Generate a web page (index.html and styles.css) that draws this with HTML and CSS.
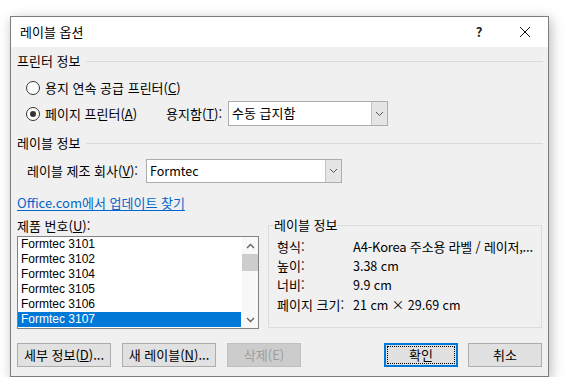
FILE: index.html
```html
<!DOCTYPE html>
<html lang="ko">
<head>
    <meta charset="UTF-8">
    <title>레이블 옵션</title>
    <link rel="stylesheet" href="styles.css">
</head>
<body>
    <div class="dialog">
        <div class="titlebar">
            <span class="title">레이블 옵션</span>
            <span class="help">?</span>
            <span class="close">
                <svg width="12" height="12" viewBox="0 0 12 12" fill="none" stroke="#111" stroke-width="1">
                    <path d="M1 1L11 11M11 1L1 11"></path>
                </svg>
            </span>
        </div>
        <div class="content">
            <div class="section-head"><span>프린터 정보</span><span class="rule"></span></div>

            <div class="radio-row first">
                <span class="radio"></span>
                <span>용지 연속 공급 프린터(<u>C</u>)</span>
            </div>
            <div class="radio-row tray-row">
                <span class="radio checked"></span>
                <span class="page-label">페이지 프린터(<u>A</u>)</span>
                <span class="tray-label">용지함(<u>T</u>):</span>
                <div class="combo tray-combo">
                    <span class="combo-text">수동 급지함</span>
                    <span class="combo-btn">
                        <svg width="9" height="6" viewBox="0 0 9 6" fill="none" stroke="#555" stroke-width="1">
                            <path d="M1 1L4.5 4.5L8 1"></path>
                        </svg>
                    </span>
                </div>
            </div>

            <div class="section-head second"><span>레이블 정보</span><span class="rule"></span></div>

            <div class="vendor-row">
                <span class="vendor-label">레이블 제조 회사(<u>V</u>):</span>
                <div class="combo vendor-combo">
                    <span class="combo-text latin">Formtec</span>
                    <span class="combo-btn">
                        <svg width="9" height="6" viewBox="0 0 9 6" fill="none" stroke="#555" stroke-width="1">
                            <path d="M1 1L4.5 4.5L8 1"></path>
                        </svg>
                    </span>
                </div>
            </div>

            <a class="update-link" href="#">Office.com에서 업데이트 찾기</a>

            <div class="lower">
                <div class="product">
                    <div class="product-label">제품 번호(<u>U</u>):</div>
                    <div class="listbox">
                        <div class="list-items">
                            <div class="item">Formtec 3101</div>
                            <div class="item">Formtec 3102</div>
                            <div class="item">Formtec 3104</div>
                            <div class="item">Formtec 3105</div>
                            <div class="item">Formtec 3106</div>
                            <div class="item selected">Formtec 3107</div>
                        </div>
                        <div class="scrollbar">
                            <span class="arrow">
                                <svg width="9" height="6" viewBox="0 0 9 6" fill="none" stroke="#606060" stroke-width="1.3">
                                    <path d="M1 5L4.5 1.5L8 5"></path>
                                </svg>
                            </span>
                            <span class="thumb"></span>
                            <span class="track"></span>
                            <span class="arrow">
                                <svg width="9" height="6" viewBox="0 0 9 6" fill="none" stroke="#606060" stroke-width="1.3">
                                    <path d="M1 1L4.5 4.5L8 1"></path>
                                </svg>
                            </span>
                        </div>
                    </div>
                </div>

                <fieldset class="info">
                    <legend>레이블 정보</legend>
                    <div class="info-grid">
                        <span>형식:</span><span class="tight">A4-Korea 주소용 라벨 / 레이저,...</span>
                        <span>높이:</span><span class="latin">3.38 cm</span>
                        <span>너비:</span><span class="latin">9.9 cm</span>
                        <span>페이지 크기:</span><span class="latin">21 cm × 29.69 cm</span>
                    </div>
                </fieldset>
            </div>

            <div class="buttons">
                <button class="btn wide">세부 정보(<u>D</u>)...</button>
                <button class="btn wide">새 레이블(<u>N</u>)...</button>
                <button class="btn disabled">삭제(E)</button>
                <span class="spacer"></span>
                <button class="btn default"><span class="focus">확인</span></button>
                <button class="btn">취소</button>
            </div>
        </div>
    </div>
</body>
</html>
```

FILE: styles.css
```css
body {
    margin: 0;
    background: #fff;
    font-family: "Noto Sans CJK KR", sans-serif;
    font-size: 13px;
    line-height: 16px;
    color: #000;
}
u {
    text-decoration: underline;
    text-underline-offset: 1px;
}
.latin {
    font-size: 12.5px;
}
.tight {
    letter-spacing: -0.2px;
}
.dialog {
    margin: 16px 0 0 10px;
    width: 537px;
    border: 1px solid #7c7c7c;
    background: #f0f0f0;
    box-shadow: 2px 3px 12px rgba(0,0,0,0.28);
}
.titlebar {
    height: 30px;
    background: #fff;
    display: flex;
    align-items: center;
    padding-left: 9px;
}
.title {
    flex: 1;
}
.help {
    width: 46px;
    text-align: center;
    font-weight: bold;
    color: #222;
}
.close {
    width: 46px;
    display: flex;
    justify-content: center;
}
.content {
    padding: 6px 6px 9px 6px;
}
.section-head {
    height: 16px;
    display: flex;
    align-items: center;
    gap: 6px;
}
.section-head.second {
    margin-top: 9px;
}
.rule {
    flex: 1;
    height: 1px;
    background: #dadada;
    margin-right: -1px;
}
.radio-row {
    display: flex;
    align-items: center;
    padding-left: 9px;
}
.radio-row.first {
    margin-top: 6px;
    height: 26px;
}
.tray-row {
    height: 25px;
}
.radio {
    width: 12px;
    height: 12px;
    border: 1px solid #333;
    border-radius: 50%;
    background: #fff;
    margin-right: 5px;
    display: flex;
    align-items: center;
    justify-content: center;
}
.radio.checked::after {
    content: "";
    width: 6px;
    height: 6px;
    border-radius: 50%;
    background: #333;
}
.page-label {
    width: 121px;
}
.tray-label {
    width: 62px;
}
.combo {
    display: flex;
    height: 25px;
    box-sizing: border-box;
    border: 1px solid #adadad;
    background: #fff;
}
.tray-combo {
    width: 160px;
}
.vendor-combo {
    width: 196px;
    height: 24px;
}
.combo-text {
    flex: 1;
    padding-left: 3px;
    line-height: 22px;
}
.combo-btn {
    width: 15px;
    background: #e5e5e5;
    border-left: 1px solid #c4c4c4;
    display: flex;
    align-items: center;
    justify-content: center;
}
.vendor-row {
    display: flex;
    align-items: center;
    margin-top: 8px;
    padding-left: 10px;
}
.vendor-label {
    width: 119px;
}
.update-link {
    display: block;
    margin-top: 12px;
    height: 16px;
    color: #0066cc;
    text-decoration: underline;
    text-underline-offset: 2px;
    width: max-content;
}
.lower {
    display: flex;
    margin-top: 6px;
    gap: 9px;
}
.product {
    width: 242px;
    flex-shrink: 0;
}
.product-label {
    height: 16px;
    margin-top: 1px;
}
.listbox {
    margin-top: 2px;
    height: 93px;
    box-sizing: border-box;
    border: 1px solid #828282;
    background: #fff;
    display: flex;
}
.list-items {
    flex: 1;
}
.item {
    height: 15px;
    line-height: 15px;
    padding-left: 3px;
    font-family: "Liberation Sans", sans-serif;
    font-size: 12px;
}
.item.selected {
    background: #0078d7;
    color: #fff;
}
.scrollbar {
    width: 16px;
    margin-left: 1px;
    background: #f8f8f8;
    display: flex;
    flex-direction: column;
}
.arrow {
    height: 17px;
    display: flex;
    align-items: center;
    justify-content: center;
}
.thumb {
    height: 17px;
    background: #cdcdcd;
}
.track {
    flex: 1;
}
.info {
    flex: 1;
    min-width: 0;
    margin: 0;
    padding: 4px 8px 0 8px;
    border: 1px solid #dcdcdc;
    height: 111px;
    box-sizing: border-box;
}
.info legend {
    padding: 0;
    margin-left: -3px;
}
.info-grid {
    display: grid;
    grid-template-columns: 76px minmax(0, 1fr);
    grid-auto-rows: 19.3px;
    align-items: center;
    white-space: nowrap;
}
.buttons {
    display: flex;
    margin-top: 14px;
    gap: 11px;
}
.btn {
    width: 74px;
    height: 24px;
    font: inherit;
    color: #000;
    background: #e1e1e1;
    border: 1px solid #adadad;
    padding: 0;
}
.btn.wide {
    width: 94px;
}
.btn.disabled {
    background: #cccccc;
    border-color: #bfbfbf;
    color: #9d9d9d;
}
.spacer {
    flex: 1;
}
.btn.default {
    border: 2px solid #0078d7;
    padding: 1px;
    margin-right: -1px;
}
.focus {
    display: block;
    height: 100%;
    box-sizing: border-box;
    border: 1px dotted #000;
}
```
